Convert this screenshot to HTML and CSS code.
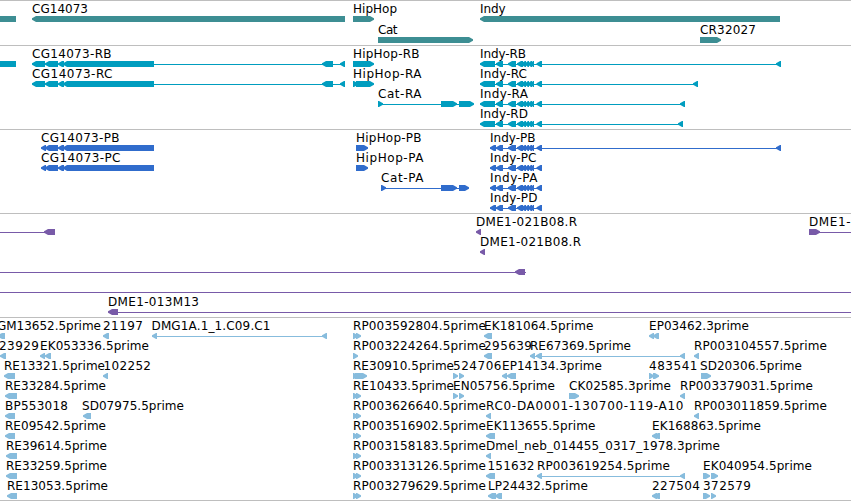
FILE: index.html
```html
<!DOCTYPE html>
<html lang="en">
<head>
<meta charset="utf-8">
<title>Genome tracks</title>
<link rel="stylesheet" href="styles.css">
</head>
<body>
<main class="browser" id="browser"></main>
<script src="tracks.js"></script>
</body>
</html>
```
FILE: styles.css
```css
body {
  margin: 0;
  background: #fff;
}

.browser {
  display: flex;
  flex-direction: column;
  width: 851px;
  height: 500px;
  overflow: hidden;
  border-bottom: 1px solid #bebebe;
}

.track {
  border-top: 1px solid #bebebe;
}

.track svg {
  display: block;
}

.track text {
  font-family: "DejaVu Sans", sans-serif;
  font-size: 12px;
  fill: #000;
}

.gene { fill: #3d8e93; }
.transcript { fill: #009dbf; }
.protein { fill: #306ccc; }
.clone { fill: #785aa8; }
.est { fill: #87bcdd; }
```
FILE: tracks.js
```js
// Feature: [lane, label, label start, label end, shapes]
// Shapes: "L a b" / "R a b" arrowed exon, "B a b" plain block, "- a b" intron line
const CG = "L 58 64,L 63 154";
const IN = "L 496 503,L 508 516,L 517 523,L 521 526,L 525 529,L 528 532,L 531 534,L 536.5 542";
const RR = "R 353 358,R 356 361";

const tracks = [
  { kind: "gene", height: 44, pitch: 21, features: [
    [0, "", 0, 0, "B 0 16"],
    [0, "CG14073", 32, 88, "L 32 345"],
    [0, "HipHop", 353, 397, "R 353 374"],
    [0, "Indy", 480, 505.5, "L 480 780"],
    [1, "Cat", 378, 397.5, "R 378 473"],
    [1, "CR32027", 700, 756, "R 700 721"]
  ]},
  { kind: "transcript", height: 83, pitch: 20, features: [
    [0, "", 0, 0, "B 0 16"],
    [0, "CG14073-RB", 32, 111.5, "L 32 45,L 45 58," + CG + ",- 154 345,L 322 333,L 340 345"],
    [1, "CG14073-RC", 32, 112.5, "L 32 45,L 45 58," + CG + ",- 154 345,L 322 333,L 340 345"],
    [0, "HipHop-RB", 353, 419.5, "R 353 374"],
    [1, "HipHop-RA", 353, 421.5, "R 353 358,R 356 374"],
    [2, "Cat-RA", 378, 421.5, "R 378 383,- 378 459,R 441 457,R 459 474"],
    [0, "Indy-RB", 480, 526, "L 480 495," + IN + ",- 495 780,L 776 781"],
    [1, "Indy-RC", 480, 527, "L 480 495," + IN + ",- 495 697,L 693 698"],
    [2, "Indy-RA", 480, 528, "L 480 495," + IN + ",- 495 684,L 680 685"],
    [3, "Indy-RD", 480, 528, "L 480 495," + IN + ",- 495 682,L 678 683"]
  ]},
  { kind: "protein", height: 83, pitch: 20, features: [
    [0, "CG14073-PB", 41, 119.5, "L 41 46,L 45 58," + CG],
    [1, "CG14073-PC", 41, 120.5, "L 41 46,L 45 58," + CG],
    [0, "HipHop-PB", 356, 421.5, "R 356 368"],
    [1, "HipHop-PA", 356, 423.5, "R 356 368"],
    [2, "Cat-PA", 381, 423.5, "R 381 386,- 381 459,R 441 457,R 459 469"],
    [0, "Indy-PB", 490, 535.5, "L 490 496," + IN + ",- 490 780,L 776 781"],
    [1, "Indy-PC", 490, 536.5, "L 490 496," + IN + ",- 490 542"],
    [2, "Indy-PA", 490, 537.5, "L 490 496," + IN + ",- 490 542"],
    [3, "Indy-PD", 490, 537.5, "L 490 496," + IN + ",- 490 542"]
  ]},
  { kind: "clone", height: 103, pitch: 20, features: [
    [0, "", 0, 0, "- 0 46,L 44 55"],
    [0, "DME1-021B08.R", 476, 577, "L 476 481"],
    [0, "DME1-", 809, 850.5, "R 809 820,- 809 851"],
    [1, "DME1-021B08.R", 480, 581, "L 480 485"],
    [2, "", 0, 0, "- 0 526,L 515 525"],
    [3, "", 0, 0, "- 0 851"],
    [4, "DME1-013M13", 108, 199, "L 108 118,- 118 851"]
  ]},
  { kind: "est", height: 182, pitch: 20, features: [
    [0, "GM13652.5prime", -3, 101, "L -2 5"],
    [0, "21197", 103, 143, "L 103 109"],
    [0, "DMG1A.1_1.C09.C1", 151.5, 270.5, "L 152 157,- 152 327,L 322 327"],
    [0, "RP003592804.5prime", 353, 486, RR],
    [0, "EK181064.5prime", 484, 593.5, "L 484 492"],
    [0, "EP03462.3prime", 649, 749, "L 649 654,L 653 659"],
    [1, "23929", -1, 39, "L 0 6"],
    [1, "EK053336.5prime", 40, 149, "L 40 45,L 45 51"],
    [1, "RP003224264.5prime", 353, 486, "R 353 358"],
    [1, "295639", 484, 532, "L 484 492"],
    [1, "RE67369.5prime", 530, 631, "L 530 535,L 536 542,- 530 685,L 680 685"],
    [1, "RP003104557.5prime", 694, 827, "L 694 699"],
    [2, "RE13321.5prime", 4, 105, "L 4 15"],
    [2, "102252", 103.5, 151, "L 103 108"],
    [2, "RE30910.5prime", 353, 454, "R 353 358,R 355 367"],
    [2, "524706", 453, 501.5, "R 453 458,R 459 464"],
    [2, "EP14134.3prime", 502, 602, "L 502 507,L 507 516"],
    [2, "483541", 649, 697.5, "R 649 654,R 653 659"],
    [2, "SD20306.5prime", 700, 802, "R 701 711"],
    [3, "RE33284.5prime", 5, 106, "L 5 17"],
    [3, "RE10433.5prime", 353, 454, RR],
    [3, "EN05756.5prime", 453, 555, "R 453 458,R 459 464"],
    [3, "CK02585.3prime", 569, 671, "R 569 579"],
    [3, "RP003379031.5prime", 680, 813, "L 680 685"],
    [4, "BP553018", 5, 68, "L 5 15"],
    [4, "SD07975.5prime", 82, 184, "L 83 91"],
    [4, "RP003626640.5prime", 353, 486, RR],
    [4, "RC0-DA0001-130700-119-A10", 486, 683.5, "L 486 491"],
    [4, "RP003011859.5prime", 694, 827, "L 694 699"],
    [5, "RE09542.5prime", 5, 106, "L 5 15"],
    [5, "RP003516902.5prime", 353, 486, RR],
    [5, "EK113655.5prime", 486, 595.5, "L 486 495"],
    [5, "EK168863.5prime", 652, 761, "L 652 657,L 654 660"],
    [6, "RE39614.5prime", 6, 107, "L 6 17"],
    [6, "RP003158183.5prime", 353, 486, RR],
    [6, "Dmel_neb_014455_0317_1978.3prime", 486, 720, "L 486 491"],
    [7, "RE33259.5prime", 6, 107, "L 6 17"],
    [7, "RP003313126.5prime", 353, 486, RR],
    [7, "151632", 487.5, 534.5, "L 486 495"],
    [7, "RP003619254.5prime", 537, 670, "L 537 542,- 537 685,L 680 685"],
    [7, "EK040954.5prime", 703, 812, "R 703 710,R 711 718"],
    [8, "RE13053.5prime", 7, 108, "L 7 17"],
    [8, "RP003279629.5prime", 353, 486, RR],
    [8, "LP24432.5prime", 488, 588, "L 488 496,L 495 502"],
    [8, "227504", 652, 700, "L 652 657,L 654 660"],
    [8, "372579", 703, 751, "R 703 710,R 711 716"]
  ]}
];

function shape(spec, y) {
  const [type, from, to] = spec.split(" ");
  const a = Number(from), b = Number(to);
  if (type === "-") return `<rect x="${a}" y="${y + 3}" width="${b - a}" height="1"/>`;
  if (type === "B") return `<rect x="${a}" y="${y}" width="${b - a}" height="6"/>`;
  const head = Math.min(4, b - a - 1);
  return type === "L"
    ? `<path d="M${a} ${y + 2.2}L${a + head} ${y}H${b}V${y + 6}H${a + head}L${a} ${y + 3.8}Z"/>`
    : `<path d="M${b} ${y + 2.2}L${b - head} ${y}H${a}V${y + 6}H${b - head}L${b} ${y + 3.8}Z"/>`;
}

document.getElementById("browser").innerHTML = tracks.map(t => {
  const body = t.features.map(([lane, label, x, end, shapes]) => {
    const y = 15 + lane * t.pitch;
    const text = label
      ? `<text x="${x}" y="${y - 3}" textLength="${end - x}" lengthAdjust="spacing">${label}</text>`
      : "";
    return shapes.split(",").map(s => shape(s, y)).join("") + text;
  }).join("");
  return `<section class="track"><svg class="${t.kind}" width="851" height="${t.height}">${body}</svg></section>`;
}).join("");
```
